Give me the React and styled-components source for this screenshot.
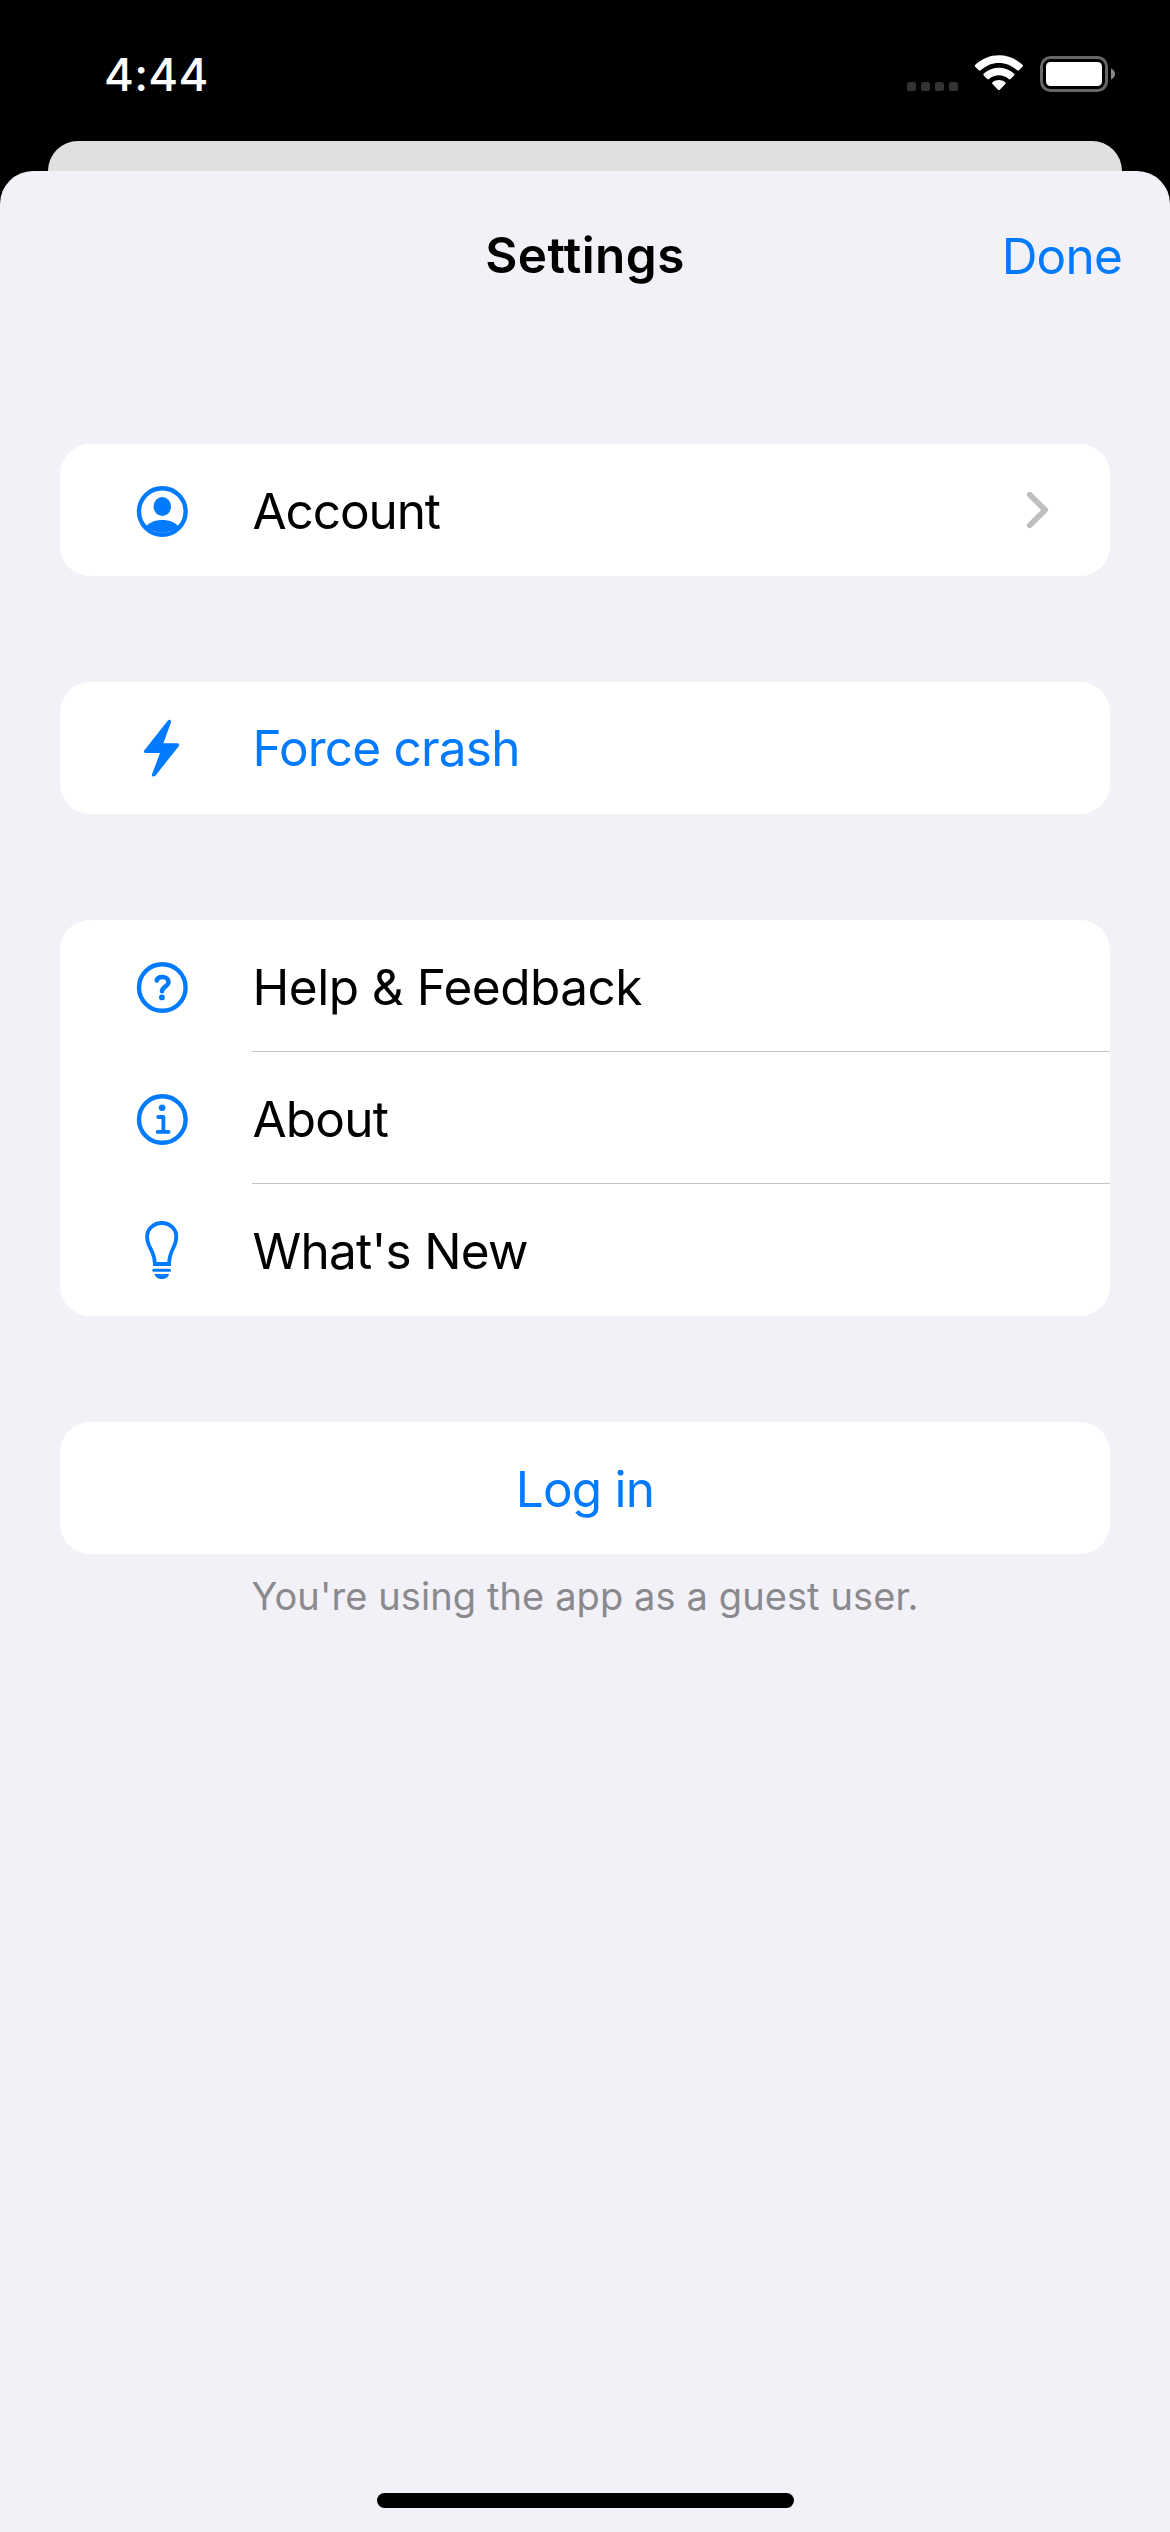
import React from "react";
import styled, { createGlobalStyle } from "styled-components";

const GlobalStyle = createGlobalStyle`
  * { box-sizing: border-box; }
  body {
    margin: 0;
    background: #000;
    font-family: Inter, "Liberation Sans", sans-serif;
  }
`;

const Screen = styled.div`
  display: flex;
  flex-direction: column;
  width: 1170px;
  height: 2532px;
  background: #000;
  overflow: hidden;
`;

const StatusBar = styled.header`
  display: flex;
  flex: none;
  justify-content: space-between;
  height: 141px;
  padding: 0 54px 0 104px;
  color: #fff;
`;

const Clock = styled.time`
  padding-top: 47px;
  font-size: 45.5px;
  font-weight: 550;
  line-height: 55px;
  letter-spacing: 0.3px;
`;

const StatusIcons = styled.div`
  display: flex;
  padding-top: 54px;
`;

const BackCard = styled.div`
  flex: none;
  height: 30px;
  margin: 0 48px;
  border-radius: 30px 30px 0 0;
  background: #e0e0e0;
`;

const Sheet = styled.main`
  display: flex;
  flex: 1;
  flex-direction: column;
  border-radius: 33px 33px 0 0;
  background: #f2f1f7;
`;

const NavBar = styled.div`
  display: grid;
  flex: none;
  grid-template-columns: 1fr auto 1fr;
  align-items: center;
  height: 168px;
  padding: 0 48px;
`;

const Title = styled.h1`
  grid-column: 2;
  margin: 0;
  font-size: 49.5px;
  font-weight: 590;
  line-height: 60px;
  letter-spacing: 0.4px;
`;

const Label = styled.span`
  color: ${(p) => (p.$link ? "#007aff" : "#000")};
  font-size: 49.5px;
  line-height: 60px;
  letter-spacing: ${(p) => p.$tracking || "-0.8px"};
  white-space: nowrap;
`;

const DoneButton = styled.button`
  justify-self: end;
  padding: 2px 0 0;
  border: 0;
  background: none;
  font-family: inherit;
`;

const Groups = styled.div`
  display: flex;
  flex-direction: column;
  gap: 106px;
  padding: 105px 60px 0;
`;

const Group = styled.section`
  display: flex;
  flex-direction: column;
  border-radius: 30px;
  background: #fff;
`;

const Row = styled.div`
  display: grid;
  grid-template-columns: 192px 1fr;
  height: 132px;
`;

const IconCell = styled.div`
  display: flex;
  align-items: center;
  padding-left: 66px;
`;

const RowBody = styled.div`
  display: flex;
  align-items: center;
  justify-content: space-between;
  padding: ${(p) => (p.$link ? "0" : "2px")} 60px 0 0.5px;
  border-bottom: ${(p) => (p.$divided ? "1px solid #c4c4c6" : "0")};
`;

const CenterRow = styled.div`
  display: flex;
  align-items: center;
  justify-content: center;
  height: 132px;
  padding-top: 2px;
`;

const Footnote = styled.p`
  margin: 17px 0 0;
  color: #8a8a8e;
  font-size: 38px;
  line-height: 50px;
  letter-spacing: 0.1px;
  text-align: center;
`;

const HomeArea = styled.footer`
  display: flex;
  flex: none;
  justify-content: center;
  margin-top: auto;
  padding-bottom: 24px;
`;

const HomeIndicator = styled.div`
  width: 417px;
  height: 15px;
  border-radius: 8px;
  background: #000;
`;

const BLUE = "#007aff";

const Glyph = ({ children }) => (
  <svg width="72" height="72" viewBox="0 0 72 72" fill="none" stroke={BLUE} strokeWidth="4.4" strokeLinecap="round" strokeLinejoin="round">
    {children}
  </svg>
);

const AccountIcon = () => (
  <Glyph>
    <circle cx="36.3" cy="37.5" r="23.3" />
    <ellipse cx="36.3" cy="32.5" rx="8.7" ry="9.4" fill={BLUE} stroke="none" />
    <path d="M20.2 52.2C24 48 29.5 46 36.3 46S48.6 48 52.4 52.2A23.3 23.3 0 0 1 20.2 52.2Z" fill={BLUE} stroke="none" />
  </Glyph>
);

const BoltIcon = () => (
  <Glyph>
    <path d="M41.7 8.8 18.6 37.9C17.2 39.6 18 41 20 41H34L26.2 61.8C25.2 64.6 28 65.4 29.6 63.4L52.5 34.5C53.9 32.8 53 31.3 51.2 31.3H37.4L44.8 10.8C45.7 8 43.2 6.9 41.7 8.8Z" fill={BLUE} stroke="none" />
  </Glyph>
);

const HelpIcon = () => (
  <Glyph>
    <circle cx="36.3" cy="37.5" r="23.3" />
    <path d="M30.7 30.6C31 28.2 33.1 26.9 36.2 26.9C39.8 26.9 42.5 28.9 42.5 32C42.5 36.5 36 36.7 36 41.3" strokeWidth="4.5" />
    <circle cx="35.9" cy="47.4" r="2.9" fill={BLUE} stroke="none" />
  </Glyph>
);

const InfoIcon = () => (
  <Glyph>
    <circle cx="36.3" cy="37.5" r="23.3" />
    <circle cx="36.1" cy="25.7" r="3.3" fill={BLUE} stroke="none" />
    <path d="M32.2 35H37.4V49.5M31.6 49.8H42.6" strokeWidth="3.8" />
  </Glyph>
);

const BulbIcon = () => (
  <Glyph>
    <path d="M28.9 50H43.1C43.1 35.5 50.3 34 50.3 22.7C50.3 14.7 43.7 9 35.8 9S21.1 14.7 21.1 22.7C21.1 34 28.5 35.5 28.9 50Z" strokeWidth="3.8" strokeLinejoin="miter" />
    <path d="M27.8 56.3H43.5" strokeWidth="3" />
    <path d="M28.4 60H43.1C42.4 63 39.7 65 35.8 65S29.2 63 28.4 60Z" fill={BLUE} stroke="none" />
  </Glyph>
);

const Chevron = () => (
  <svg width="24" height="40" viewBox="0 0 24 40" fill="none" stroke="#bfbfbf" strokeWidth="5.8" strokeLinecap="round" strokeLinejoin="round">
    <path d="M3.8 3.8 19.2 19 3.8 34.2" />
  </svg>
);

const CellularDots = () => (
  <svg width="64" height="50" viewBox="0 0 64 50" fill="#333">
    {[3, 17, 31, 45].map((x) => (
      <rect key={x} x={x} y="28" width="9" height="9" rx="2.6" />
    ))}
  </svg>
);

const WifiIcon = () => (
  <svg width="64" height="50" viewBox="0 0 64 50" fill="#fff">
    <path d="M7.3 10.8C20.7-2 41.1-2 54.5 10.8C55.1 11.4 55.1 12.1 54.6 12.7L51 16.3C50.5 16.8 49.8 16.8 49.2 16.3C38.7 6.4 23 6.4 12.6 16.3C12 16.8 11.3 16.8 10.8 16.3L7.2 12.7C6.7 12.1 6.7 11.4 7.3 10.8Z" />
    <path d="M15.8 19.6C24.5 11.7 37.3 11.7 46 19.6C46.6 20.2 46.6 20.8 46.1 21.4L42.5 25C42 25.5 41.3 25.5 40.7 25C35.2 20 26.6 20 21.1 25C20.5 25.5 19.8 25.5 19.3 25L15.7 21.4C15.2 20.8 15.2 20.2 15.8 19.6Z" />
    <path d="M24.6 28.3C28.3 25.3 33.5 25.3 37.2 28.3C37.8 28.8 37.8 29.5 37.3 30L31.8 35.8C31.2 36.4 30.6 36.4 30 35.8L24.5 30C24 29.5 24 28.8 24.6 28.3Z" />
  </svg>
);

const BatteryIcon = () => (
  <svg width="84" height="50" viewBox="0 0 84 50">
    <rect x="9.5" y="3.5" width="65" height="33" rx="9" fill="none" stroke="#666" strokeWidth="3" />
    <rect x="14" y="8" width="56" height="24" rx="4.5" fill="#fff" />
    <path d="M79 14.5C81.6 15.4 83 17.6 83 20S81.6 24.6 79 25.5Z" fill="#888" />
  </svg>
);

const ListRow = ({ icon, text, tracking, link, divided, arrow }) => (
  <Row>
    <IconCell>{icon}</IconCell>
    <RowBody $divided={divided} $link={link}>
      <Label $link={link} $tracking={tracking}>{text}</Label>
      {arrow && <Chevron />}
    </RowBody>
  </Row>
);

export default function App() {
  return (
    <Screen>
      <GlobalStyle />
      <StatusBar>
        <Clock>4:44</Clock>
        <StatusIcons>
          <CellularDots />
          <WifiIcon />
          <BatteryIcon />
        </StatusIcons>
      </StatusBar>
      <BackCard />
      <Sheet>
        <NavBar>
          <Title>Settings</Title>
          <DoneButton>
            <Label $link>Done</Label>
          </DoneButton>
        </NavBar>
        <Groups>
          <Group>
            <ListRow icon={<AccountIcon />} text="Account" tracking="-1.1px" arrow />
          </Group>
          <Group>
            <ListRow icon={<BoltIcon />} text="Force crash" link />
          </Group>
          <Group>
            <ListRow icon={<HelpIcon />} text="Help & Feedback" tracking="-0.5px" divided />
            <ListRow icon={<InfoIcon />} text="About" divided />
            <ListRow icon={<BulbIcon />} text="What's New" tracking="-0.75px" />
          </Group>
          <div>
            <Group>
              <CenterRow>
                <Label $link>Log in</Label>
              </CenterRow>
            </Group>
            <Footnote>You're using the app as a guest user.</Footnote>
          </div>
        </Groups>
        <HomeArea>
          <HomeIndicator />
        </HomeArea>
      </Sheet>
    </Screen>
  );
}
